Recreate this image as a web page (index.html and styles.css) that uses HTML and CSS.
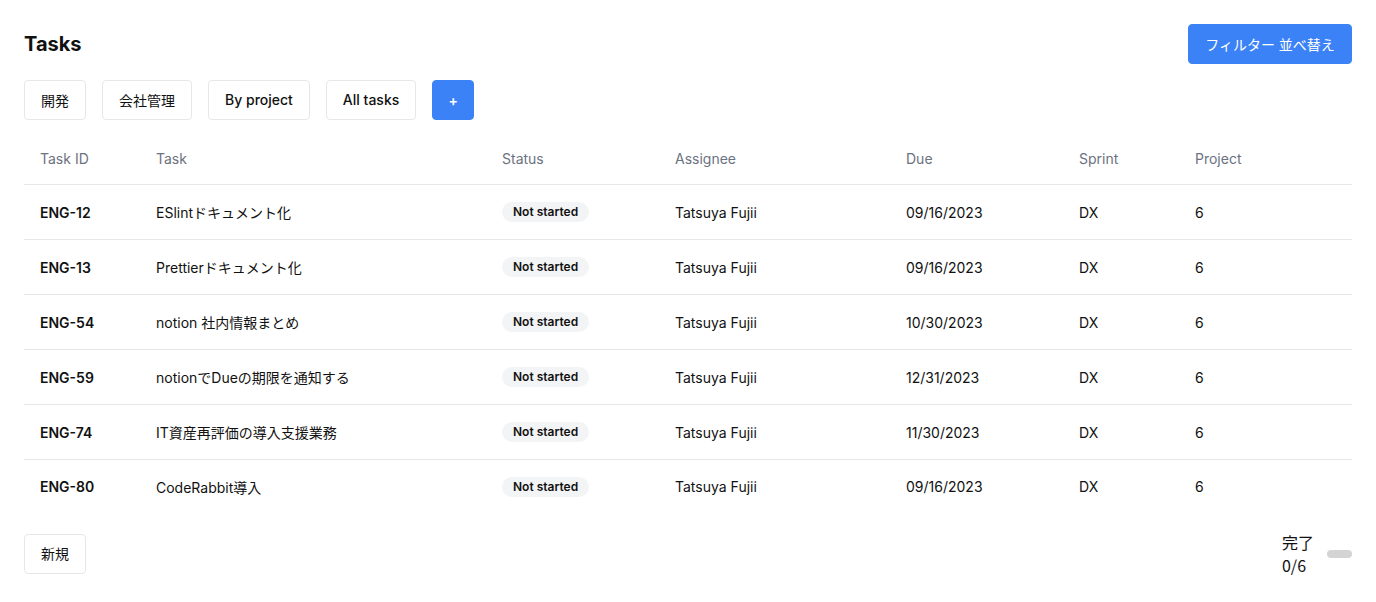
FILE: index.html
```html
<!DOCTYPE html>
<html lang="ja">
<head>
<meta charset="utf-8">
<link rel="stylesheet" href="styles.css">
</head>
<body>
<div class="page">
  <div class="topbar">
    <h1 class="title">Tasks</h1>
    <button class="btn btn-primary btn-filter">フィルター 並べ替え</button>
  </div>
  <div class="tabs">
    <button class="btn">開発</button>
    <button class="btn">会社管理</button>
    <button class="btn btn-strong">By project</button>
    <button class="btn btn-strong">All tasks</button>
    <button class="btn btn-primary btn-plus">+</button>
  </div>
  <table class="tasks">
    <colgroup>
      <col style="width:116px"><col style="width:346px"><col style="width:173px"><col style="width:231px"><col style="width:173px"><col style="width:116px"><col>
    </colgroup>
    <thead>
      <tr><th>Task ID</th><th>Task</th><th>Status</th><th>Assignee</th><th>Due</th><th>Sprint</th><th>Project</th></tr>
    </thead>
    <tbody>
      <tr><td class="id">ENG-12</td><td>ESlintドキュメント化</td><td><span class="badge">Not started</span></td><td>Tatsuya Fujii</td><td>09/16/2023</td><td>DX</td><td>6</td></tr>
      <tr><td class="id">ENG-13</td><td>Prettierドキュメント化</td><td><span class="badge">Not started</span></td><td>Tatsuya Fujii</td><td>09/16/2023</td><td>DX</td><td>6</td></tr>
      <tr><td class="id">ENG-54</td><td>notion 社内情報まとめ</td><td><span class="badge">Not started</span></td><td>Tatsuya Fujii</td><td>10/30/2023</td><td>DX</td><td>6</td></tr>
      <tr><td class="id">ENG-59</td><td>notionでDueの期限を通知する</td><td><span class="badge">Not started</span></td><td>Tatsuya Fujii</td><td>12/31/2023</td><td>DX</td><td>6</td></tr>
      <tr><td class="id">ENG-74</td><td>IT資産再評価の導入支援業務</td><td><span class="badge">Not started</span></td><td>Tatsuya Fujii</td><td>11/30/2023</td><td>DX</td><td>6</td></tr>
      <tr><td class="id">ENG-80</td><td>CodeRabbit導入</td><td><span class="badge">Not started</span></td><td>Tatsuya Fujii</td><td>09/16/2023</td><td>DX</td><td>6</td></tr>
    </tbody>
  </table>
  <div class="footer">
    <button class="btn">新規</button>
    <div class="progress">
      <div class="progress-label">完了<br>0/6</div>
      <div class="progress-bar"></div>
    </div>
  </div>
</div>
</body>
</html>
```

FILE: styles.css
```css
* { box-sizing: border-box; }
html, body { margin: 0; padding: 0; background: #fff; }
body {
  font-family: Inter, "Noto Sans CJK JP", sans-serif;
  font-size: 14px;
  color: #111;
}
.page { padding: 24px; }
.topbar {
  display: flex;
  justify-content: space-between;
  align-items: center;
  height: 40px;
}
.title {
  margin: 0;
  font-size: 20px;
  font-weight: 700;
  line-height: 40px;
}
.btn {
  font-family: inherit;
  font-size: 14px;
  height: 40px;
  padding: 0 16px 1px;
  border: 1px solid #e5e7eb;
  border-radius: 4px;
  background: #fff;
  color: #111;
  cursor: pointer;
}
.btn-strong { font-weight: 500; }
.btn-primary {
  background: #3b82f6;
  border-color: #3b82f6;
  color: #fff;
}
.btn-filter { width: 164px; padding: 0; }
.btn-plus { width: 42px; padding: 0; font-weight: 600; }
.tabs {
  display: flex;
  gap: 16px;
  margin-top: 16px;
}
.tasks {
  margin-top: 20px;
  width: 100%;
  table-layout: fixed;
  border-collapse: collapse;
}
.tasks th {
  text-align: left;
  font-weight: 400;
  color: #6b7280;
  height: 44px;
  line-height: 20px;
  padding: 9px 16px 15px;
  border-bottom: 1px solid #e5e7eb;
  vertical-align: top;
}
.tasks td {
  height: 55px;
  padding: 0 16px;
  border-bottom: 1px solid #e5e7eb;
  vertical-align: middle;
  white-space: nowrap;
}
.tasks tbody tr:last-child td { border-bottom: none; height: 54px; }
.tasks td.id { font-weight: 600; }
.badge {
  display: inline-block;
  background: #f3f4f6;
  border-radius: 999px;
  padding: 0 11px;
  font-size: 12px;
  font-weight: 600;
  line-height: 20px;
  color: #111;
}
.footer {
  display: flex;
  justify-content: space-between;
  align-items: center;
  margin-top: 17px;
}
.progress {
  display: flex;
  align-items: center;
  gap: 13px;
}
.progress-label {
  font-size: 16px;
  line-height: 23px;
  font-family: "Noto Sans CJK JP", sans-serif;
}
.progress-bar {
  width: 25px;
  height: 8px;
  border-radius: 4px;
  background: #d4d4d4;
}
```
